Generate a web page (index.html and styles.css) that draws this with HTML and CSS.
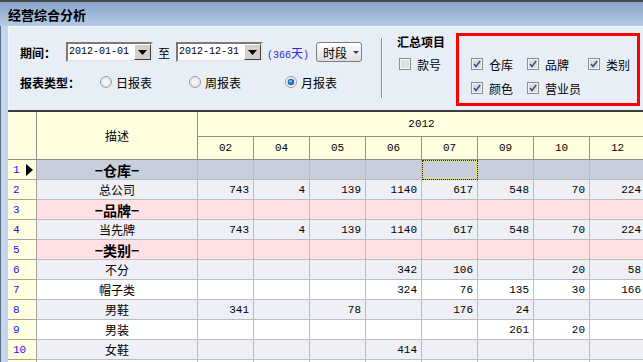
FILE: index.html
```html
<!DOCTYPE html>
<html>
<head>
<meta charset="utf-8">
<link rel="stylesheet" href="styles.css">
</head>
<body>
<div class="titlebar">经营综合分析</div>
<div class="frame">
  <div class="panel">
    <div class="left">
      <div class="row">
        <span class="lbl lbl-period">期间：</span>
        <div class="date"><span class="mono">2012-01-01</span><span class="ddbtn"><svg width="9" height="5" viewBox="0 0 9 5"><path d="M0 0H9L4.5 5Z" fill="#000"/></svg></span></div>
        <span class="to">至</span>
        <div class="date"><span class="mono">2012-12-31</span><span class="ddbtn"><svg width="9" height="5" viewBox="0 0 9 5"><path d="M0 0H9L4.5 5Z" fill="#000"/></svg></span></div>
        <span class="days"><span class="mono">(366</span>天<span class="mono">)</span></span>
        <div class="btn"><span>时段</span><svg class="btn-arrow" width="6" height="3" viewBox="0 0 6 3"><path d="M0 0H6L3 3Z" fill="#2b3b6b"/></svg></div>
      </div>
      <div class="row">
        <span class="lbl lbl-type">报表类型：</span>
        <label class="radio r-day"><svg width="12" height="12" viewBox="0 0 12 12"><circle cx="6" cy="6" r="5.5" fill="#f4f4f4" stroke="#9a9a9a"/><circle cx="6" cy="6" r="4.2" fill="none" stroke="#d8d8d8"/></svg><span>日报表</span></label>
        <label class="radio r-week"><svg width="12" height="12" viewBox="0 0 12 12"><circle cx="6" cy="6" r="5.5" fill="#f4f4f4" stroke="#9a9a9a"/><circle cx="6" cy="6" r="4.2" fill="none" stroke="#d8d8d8"/></svg><span>周报表</span></label>
        <label class="radio r-month"><svg width="12" height="12" viewBox="0 0 12 12"><circle cx="6" cy="6" r="5.5" fill="#f4f4f4" stroke="#9a9a9a"/><circle cx="6" cy="6" r="3.3" fill="#1f6fb8"/><circle cx="5.4" cy="5.3" r="1.3" fill="#7fc3f0"/></svg><span>月报表</span></label>
      </div>
    </div>
    <div class="sep"></div>
    <div class="summary">
      <div class="lbl">汇总项目</div>
      <label class="cb cb-kh"><svg width="12" height="12" viewBox="0 0 12 12"><rect x="0.5" y="0.5" width="11" height="11" fill="#f2f2f2" stroke="#8e8f8f"/><rect x="2" y="2" width="8" height="8" fill="#e0e0e0"/></svg><span>款号</span></label>
    </div>
    <div class="redbox">
      <label class="cb"><svg width="12" height="12" viewBox="0 0 12 12"><rect x="0.5" y="0.5" width="11" height="11" fill="#f2f2f2" stroke="#8e8f8f"/><rect x="2" y="2" width="8" height="8" fill="#dedede"/><path d="M3 6L5 8.5L9.2 3" fill="none" stroke="#3c4c94" stroke-width="1.6"/></svg><span>仓库</span></label>
      <label class="cb"><svg width="12" height="12" viewBox="0 0 12 12"><rect x="0.5" y="0.5" width="11" height="11" fill="#f2f2f2" stroke="#8e8f8f"/><rect x="2" y="2" width="8" height="8" fill="#dedede"/><path d="M3 6L5 8.5L9.2 3" fill="none" stroke="#3c4c94" stroke-width="1.6"/></svg><span>品牌</span></label>
      <label class="cb"><svg width="12" height="12" viewBox="0 0 12 12"><rect x="0.5" y="0.5" width="11" height="11" fill="#f2f2f2" stroke="#8e8f8f"/><rect x="2" y="2" width="8" height="8" fill="#dedede"/><path d="M3 6L5 8.5L9.2 3" fill="none" stroke="#3c4c94" stroke-width="1.6"/></svg><span>类别</span></label>
      <label class="cb"><svg width="12" height="12" viewBox="0 0 12 12"><rect x="0.5" y="0.5" width="11" height="11" fill="#f2f2f2" stroke="#8e8f8f"/><rect x="2" y="2" width="8" height="8" fill="#dedede"/><path d="M3 6L5 8.5L9.2 3" fill="none" stroke="#3c4c94" stroke-width="1.6"/></svg><span>颜色</span></label>
      <label class="cb"><svg width="12" height="12" viewBox="0 0 12 12"><rect x="0.5" y="0.5" width="11" height="11" fill="#f2f2f2" stroke="#8e8f8f"/><rect x="2" y="2" width="8" height="8" fill="#dedede"/><path d="M3 6L5 8.5L9.2 3" fill="none" stroke="#3c4c94" stroke-width="1.6"/></svg><span>营业员</span></label>
    </div>
  </div>
  <div class="grid">
    <table>
      <colgroup>
        <col class="c-rh"><col class="c-desc">
        <col class="c-m"><col class="c-m"><col class="c-m"><col class="c-m"><col class="c-m"><col class="c-m"><col class="c-m"><col class="c-m">
      </colgroup>
      <thead>
        <tr class="h-year">
          <th rowspan="2"></th>
          <th rowspan="2">描述</th>
          <th colspan="8" class="mono">2012</th>
        </tr>
        <tr class="h-month mono">
          <th>02</th><th>04</th><th>05</th><th>06</th><th>07</th><th>09</th><th>10</th><th>12</th>
        </tr>
      </thead>
      <tbody>
        <tr class="grp blue">
          <td class="rh"><div class="rhin"><span>1</span><span class="tri"></span></div></td>
          <td class="desc">−仓库−</td>
          <td></td><td></td><td></td><td></td><td class="sel"></td><td></td><td></td><td></td>
        </tr>
        <tr class="gray">
          <td class="rh"><div class="rhin"><span>2</span></div></td>
          <td class="desc">总公司</td>
          <td>743</td><td>4</td><td>139</td><td>1140</td><td>617</td><td>548</td><td>70</td><td>224</td>
        </tr>
        <tr class="grp pink">
          <td class="rh"><div class="rhin"><span>3</span></div></td>
          <td class="desc">−品牌−</td>
          <td></td><td></td><td></td><td></td><td></td><td></td><td></td><td></td>
        </tr>
        <tr class="gray">
          <td class="rh"><div class="rhin"><span>4</span></div></td>
          <td class="desc">当先牌</td>
          <td>743</td><td>4</td><td>139</td><td>1140</td><td>617</td><td>548</td><td>70</td><td>224</td>
        </tr>
        <tr class="grp pink">
          <td class="rh"><div class="rhin"><span>5</span></div></td>
          <td class="desc">−类别−</td>
          <td></td><td></td><td></td><td></td><td></td><td></td><td></td><td></td>
        </tr>
        <tr class="gray">
          <td class="rh"><div class="rhin"><span>6</span></div></td>
          <td class="desc">不分</td>
          <td></td><td></td><td></td><td>342</td><td>106</td><td></td><td>20</td><td>58</td>
        </tr>
        <tr class="white">
          <td class="rh"><div class="rhin"><span>7</span></div></td>
          <td class="desc">帽子类</td>
          <td></td><td></td><td></td><td>324</td><td>76</td><td>135</td><td>30</td><td>166</td>
        </tr>
        <tr class="gray">
          <td class="rh"><div class="rhin"><span>8</span></div></td>
          <td class="desc">男鞋</td>
          <td>341</td><td></td><td>78</td><td></td><td>176</td><td>24</td><td></td><td></td>
        </tr>
        <tr class="white">
          <td class="rh"><div class="rhin"><span>9</span></div></td>
          <td class="desc">男装</td>
          <td></td><td></td><td></td><td></td><td></td><td>261</td><td>20</td><td></td>
        </tr>
        <tr class="gray">
          <td class="rh"><div class="rhin"><span>10</span></div></td>
          <td class="desc">女鞋</td>
          <td></td><td></td><td></td><td>414</td><td></td><td></td><td></td><td></td>
        </tr>
        <tr class="white">
          <td class="rh"></td>
          <td class="desc"></td>
          <td></td><td></td><td></td><td></td><td></td><td></td><td></td><td></td>
        </tr>
      </tbody>
    </table>
  </div>
</div>
</body>
</html>
```
FILE: styles.css
```css
* { box-sizing: border-box; }
html, body { margin: 0; padding: 0; }
body {
  width: 643px;
  height: 362px;
  overflow: hidden;
  font: 12px "Noto Sans CJK SC", sans-serif;
  color: #000;
  background: #c3d7ee;
}
.mono { font-family: "Liberation Mono", monospace; font-size: 11px; }

.titlebar {
  height: 26px;
  border-top: 2px solid #4a4a4a;
  background: linear-gradient(#88a4c7, #b5cbe5);
  display: flex;
  align-items: center;
  padding-left: 8px;
  font-weight: bold;
  font-size: 13px;
}
.frame {
  height: 336px;
  border-left: 1px solid #5b6e86;
  padding-left: 7px;
  background: #c3d7ee;
  display: flex;
  flex-direction: column;
}
.panel {
  height: 84px;
  flex: none;
  background: #e8eef6;
  border-top: 1px solid #f6f9fc;
  border-left: 1px solid #f6f9fc;
  display: flex;
}
.left {
  width: 372px;
  padding: 15px 0 0 11px;
  display: flex;
  flex-direction: column;
  gap: 10px;
}
.row { display: flex; align-items: center; height: 20px; white-space: nowrap; }
.lbl { font-weight: bold; }
.lbl-period { width: 46px; }
.lbl-type { width: 80px; }
.date {
  width: 87px;
  height: 20px;
  background: #fff;
  border: 2px solid;
  border-color: #7a7a7a #e8e8e8 #e8e8e8 #7a7a7a;
  display: flex;
  align-items: center;
  padding-left: 1px;
}
.date .mono { flex: 1; line-height: 16px; font-size: 10px; }
.ddbtn {
  width: 17px;
  height: 16px;
  background: #d4d0c8;
  border: 1px solid;
  border-color: #fff #404040 #404040 #fff;
  display: flex;
  align-items: center;
  justify-content: center;
}
.to { margin: 0 6px 0 5px; }
.days { color: #2a2ad8; margin-left: 4px; width: 45px; }
.days .mono { font-size: 10px; }
.btn {
  width: 46px;
  height: 20px;
  border: 1px solid #7c7c7c;
  border-radius: 3px;
  background: linear-gradient(#ffffff, #dedede);
  display: flex;
  align-items: center;
  padding-left: 6px;
  gap: 6px;
  margin-left: 4px;
  white-space: nowrap;
  flex: none;
}
.radio { display: flex; align-items: center; gap: 4px; }
.r-day { width: 89px; }
.r-week { width: 96px; }
.sep {
  width: 2px;
  height: 60px;
  margin-top: 11px;
  border-left: 1px solid #8a8a8a;
  border-right: 1px solid #ffffff;
}
.summary {
  width: 73px;
  padding: 7px 0 0 14px;
  display: flex;
  flex-direction: column;
  gap: 7px;
}
.summary .lbl { line-height: 16px; white-space: nowrap; }
.cb { display: flex; align-items: center; gap: 6px; height: 14px; white-space: nowrap; }
.cb-kh { margin-left: 2px; }
.redbox {
  width: 184px;
  height: 73px;
  margin-top: 6px;
  border: 3px solid #ff0000;
  padding: 21px 0 0 12px;
  display: grid;
  grid-template-columns: 56px 61px auto;
  grid-auto-rows: 14px;
  row-gap: 10px;
  align-content: start;
}

.grid {
  flex: 1;
  overflow: hidden;
  border-top: 2px solid #3c3c3c;
  background: #fff;
}
table {
  table-layout: fixed;
  border-spacing: 0;
  width: 638px;
}
.c-rh { width: 29px; }
.c-desc { width: 161px; }
.c-m { width: 56px; }
th, td {
  padding: 0;
  border-right: 1px solid #b9bcc4;
  border-bottom: 1px solid #b9bcc4;
  white-space: nowrap;
  overflow: hidden;
}
th {
  background: #ffffe0;
  border-color: #8e8e8e;
  font-weight: normal;
  text-align: center;
  line-height: 14px;
}
.h-year th { height: 25px; }
.h-month th { height: 23px; }
tbody td {
  height: 20px;
  line-height: 18px;
  text-align: right;
  padding-right: 4px;
  font-family: "Liberation Mono", monospace;
  font-size: 11px;
}
tbody td.desc {
  text-align: center;
  padding-right: 0;
  font-family: "Noto Sans CJK SC", sans-serif;
  font-size: 12px;
}
tbody tr.grp td.desc { font-weight: bold; font-size: 14px; }
tbody td.rh {
  background: #ffffe0;
  border-color: #a2a2a2;
  padding: 0 0 0 5px;
  color: #1414ff;
  text-align: left;
}
.rhin { display: flex; align-items: center; justify-content: space-between; padding-right: 3px; height: 18px; }
.tri {
  width: 0; height: 0;
  border-left: 7px solid #000;
  border-top: 6px solid transparent;
  border-bottom: 6px solid transparent;
}
tr.blue td { background: #c9cedc; }
tr.pink td { background: #ffe0e3; }
tr.gray td { background: #eff0f5; }
tr.white td { background: #ffffff; }
tbody tr td.rh { background: #ffffe0; }
td.sel {
  box-shadow: inset 0 0 0 1px #e8e060;
  outline: 1px dotted #222;
  outline-offset: -1px;
}
```
